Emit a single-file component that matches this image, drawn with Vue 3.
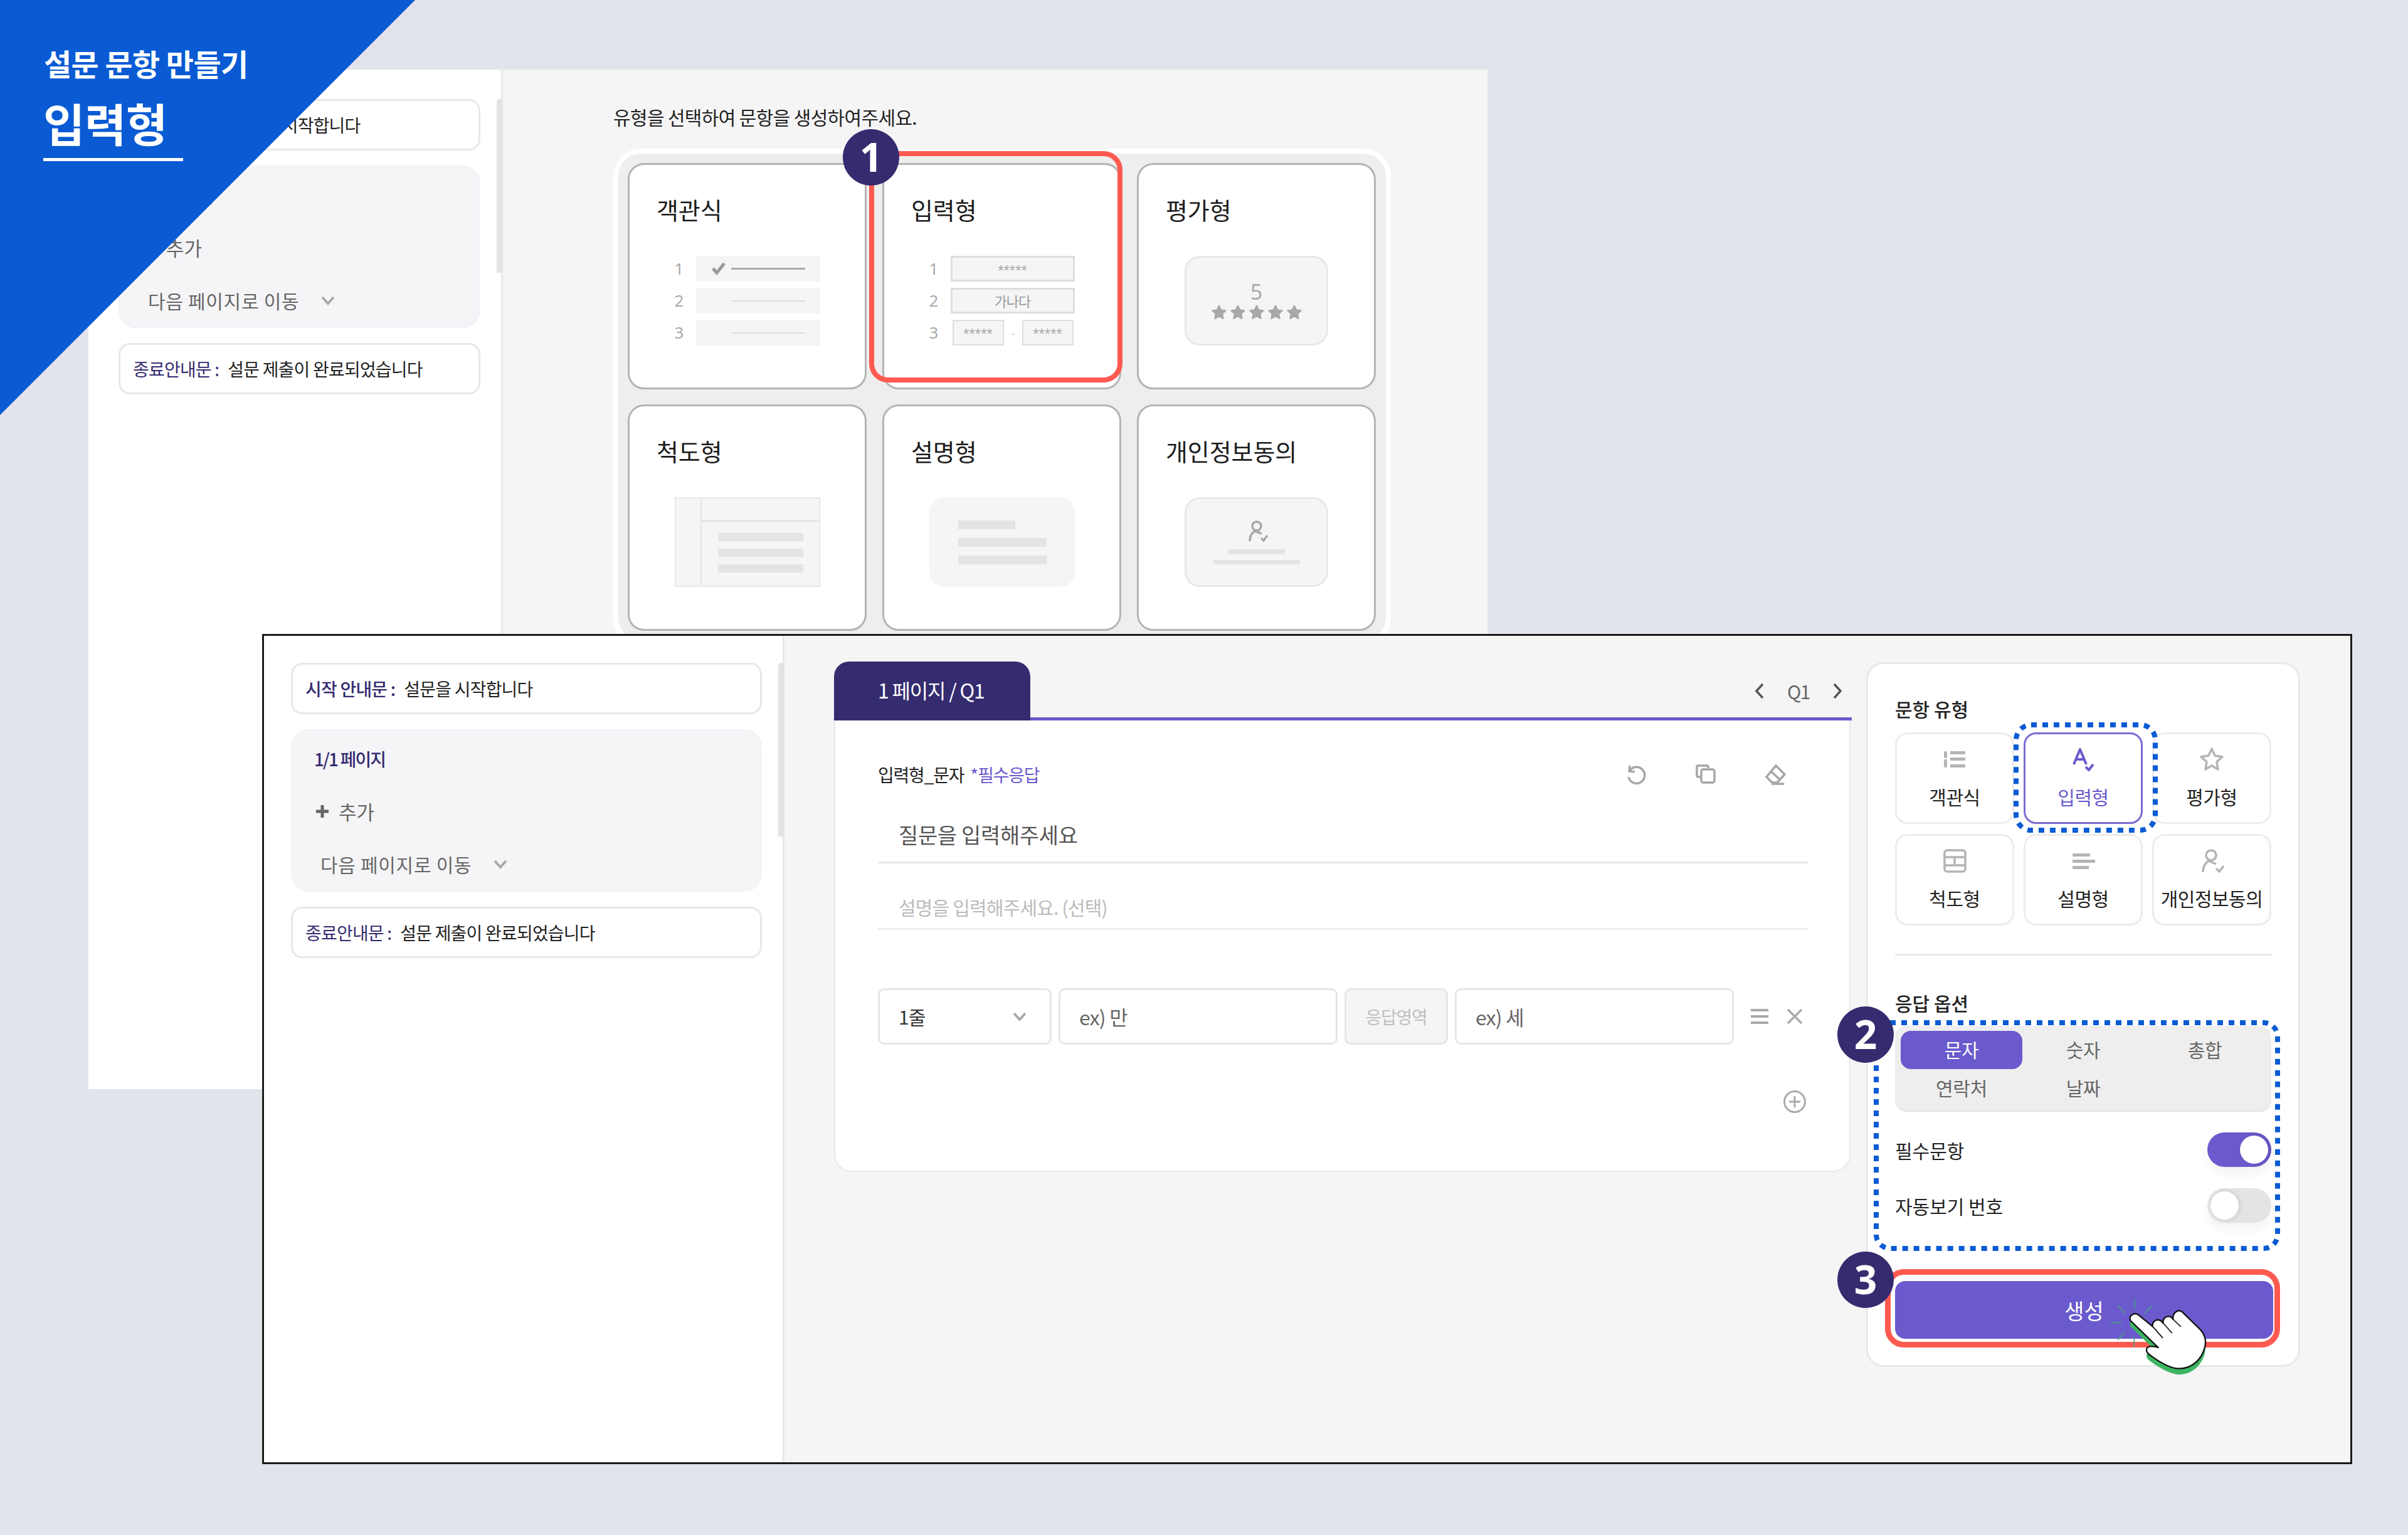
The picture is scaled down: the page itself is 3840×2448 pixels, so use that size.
<script setup>
const typeCards = ['객관식', '입력형', '평가형', '척도형', '설명형', '개인정보동의']
const tiles = [
  { label: '객관식', icon: 'list' },
  { label: '입력형', icon: 'a', on: true },
  { label: '평가형', icon: 'star' },
  { label: '척도형', icon: 'table' },
  { label: '설명형', icon: 'text' },
  { label: '개인정보동의', icon: 'person' }
]
const segs = ['문자', '숫자', '총합', '연락처', '날짜']
const starPts = '12,1.5 15.3,8.3 22.8,9.3 17.3,14.5 18.7,22 12,18.4 5.3,22 6.7,14.5 1.2,9.3 8.7,8.3'
const handPath = 'M472 318C462 295 490 275 512 292L578 346C575 328 590 313 606 315C615 315 622 322 628 330C626 310 640 297 655 298C665 298 672 305 676 312C672 285 695 262 718 275L805 360C828 385 836 415 828 445C815 500 770 548 705 548C670 548 620 522 575 490C555 478 545 465 550 452C555 438 585 440 605 447Z'
</script>

<template>
  <div class="canvas">
    <section class="win back">
      <aside class="side back-side">
        <div class="note"><b>시작 안내문 :</b><span>설문을 시작합니다</span></div>
        <div class="group">
          <div class="g-title">1/1 페이지</div>
          <div class="g-add"><svg class="plus" viewBox="0 0 24 24"><path d="M12 2v20M2 12h20" /></svg>추가</div>
          <div class="g-next">다음 페이지로 이동<svg class="chev" viewBox="0 0 24 16"><path d="M3 3l9 10 9-10" /></svg></div>
        </div>
        <div class="note"><i>종료안내문 :</i><span>설문 제출이 완료되었습니다</span></div>
        <div class="scroll back-scroll"></div>
      </aside>
      <main class="back-main">
        <p class="intro">유형을 선택하여 문항을 생성하여주세요.</p>
        <div class="frame">
          <article v-for="(c, i) in typeCards" :key="c" class="tcard">
            <h3>{{ c }}</h3>
            <div v-if="i === 0" class="ill rows">
              <template v-for="n in 3" :key="n">
                <span class="num">{{ n }}</span>
                <div class="opt">
                  <svg v-if="n === 1" class="ck" viewBox="0 0 24 22"><path d="M3 11l6 7L21 3" /></svg>
                  <i :class="n === 1 ? 'ln dark' : 'ln'"></i>
                </div>
              </template>
            </div>
            <div v-else-if="i === 1" class="ill rows">
              <span class="num">1</span><div class="inp">*****</div>
              <span class="num">2</span><div class="inp kr">가나다</div>
              <span class="num">3</span>
              <div class="pair"><div class="inp">*****</div><em>-</em><div class="inp">*****</div></div>
            </div>
            <div v-else-if="i === 2" class="ill box bordered rate">
              <span>5</span>
              <div class="stars"><svg v-for="n in 5" :key="n" viewBox="0 0 24 24"><polygon :points="starPts" /></svg></div>
            </div>
            <div v-else-if="i === 3" class="ill scale">
              <div class="s-left"></div>
              <div class="s-right"><div class="s-head"></div><div class="s-bars"><i></i><i></i><i></i></div></div>
            </div>
            <div v-else-if="i === 4" class="ill box desc-ill"><i class="short"></i><i></i><i></i></div>
            <div v-else class="ill box bordered agree">
              <svg viewBox="0 0 36 36"><circle cx="17" cy="10" r="7" /><path d="M6 34c0-8 3-13 8-16l11 4" /><path d="M24 29l4 4 6-8" /></svg>
              <i class="a1"></i><i class="a2"></i>
            </div>
          </article>
        </div>
      </main>
    </section>

    <div class="corner">
      <p class="c-sub">설문 문항 만들기</p>
      <p class="c-main">입력형</p>
    </div>

    <section class="win front">
      <aside class="side front-side">
        <div class="note"><b>시작 안내문 :</b><span>설문을 시작합니다</span></div>
        <div class="group">
          <div class="g-title">1/1 페이지</div>
          <div class="g-add"><svg class="plus" viewBox="0 0 24 24"><path d="M12 2v20M2 12h20" /></svg>추가</div>
          <div class="g-next">다음 페이지로 이동<svg class="chev" viewBox="0 0 24 16"><path d="M3 3l9 10 9-10" /></svg></div>
        </div>
        <div class="note"><i>종료안내문 :</i><span>설문 제출이 완료되었습니다</span></div>
        <div class="scroll front-scroll"></div>
      </aside>

      <div class="editor">
        <div class="tabbar">
          <div class="tab">1 페이지 / Q1</div>
          <div class="pager">
            <svg viewBox="0 0 16 28"><path d="M13 3L3 14l10 11" /></svg>
            <span>Q1</span>
            <svg viewBox="0 0 16 28"><path d="M3 3l10 11L3 25" /></svg>
          </div>
        </div>
        <div class="qcard">
          <div class="toolbar">
            <div class="q-type">입력형_문자<span>*필수응답</span></div>
            <div class="tools">
              <svg viewBox="0 0 36 36"><path d="M8 4l-1 9 9 1" /><path d="M8 12A13 13 0 1 1 6 22" /></svg>
              <svg viewBox="0 0 36 36"><path d="M22 8V6a2 2 0 0 0-2-2H6a2 2 0 0 0-2 2v14a2 2 0 0 0 2 2h4" /><rect x="11" y="10" width="21" height="21" rx="3" /></svg>
              <svg viewBox="0 0 36 36"><path d="M19 4l14 14-12 13h-8L4 22z" /><path d="M11 13l14 13" /><path d="M12 33h20" /></svg>
            </div>
          </div>
          <div class="q-line">질문을 입력해주세요</div>
          <div class="d-line">설명을 입력해주세요. (선택)</div>
          <div class="ans-row">
            <div class="fld sel">1줄<svg class="chev" viewBox="0 0 24 16"><path d="M3 3l9 10 9-10" /></svg></div>
            <div class="fld in">ex) 만</div>
            <div class="fld ans">응답영역</div>
            <div class="fld in">ex) 세</div>
            <svg class="menu" viewBox="0 0 30 26"><path d="M1 3h28M1 13h28M1 23h28" /></svg>
            <svg class="close" viewBox="0 0 26 26"><path d="M2 2l22 22M24 2L2 24" /></svg>
          </div>
          <div class="add-row">
            <svg viewBox="0 0 38 38"><circle cx="19" cy="19" r="16.5" /><path d="M19 10v18M10 19h18" /></svg>
          </div>
        </div>
      </div>

      <aside class="panel">
        <h4 class="h-type">문항 유형</h4>
        <div class="tiles">
          <div v-for="t in tiles" :key="t.label" :class="['tile', { on: t.on }]">
            <svg v-if="t.icon === 'list'" viewBox="0 0 40 40"><g class="fillg"><rect x="3" y="7" width="5" height="11" rx="2" /><rect x="3" y="20" width="5" height="13" rx="2" /><rect x="13" y="7" width="24" height="5" rx="1" /><rect x="13" y="17" width="24" height="5" rx="1" /><rect x="13" y="28" width="24" height="5" rx="1" /></g></svg>
            <svg v-else-if="t.icon === 'a'" viewBox="0 0 40 40"><path d="M5 28L15 4l10 24M8.500 20h13" /><path d="M24 32l5 5 7-9" /></svg>
            <svg v-else-if="t.icon === 'star'" viewBox="0 0 40 40"><path d="M20 3l5 11 12 2-9 8 2 12-10-6-10 6 2-12-9-8 12-2z" /></svg>
            <svg v-else-if="t.icon === 'table'" viewBox="0 0 40 40"><rect x="4" y="3" width="33" height="34" rx="4" /><path d="M4 14h33M4 27h33M20 14v13" /></svg>
            <svg v-else-if="t.icon === 'text'" viewBox="0 0 40 40"><g class="fillg"><rect x="3" y="8" width="28" height="5" rx="1" /><rect x="3" y="18" width="36" height="5" rx="1" /><rect x="3" y="28" width="26" height="5" rx="1" /></g></svg>
            <svg v-else viewBox="0 0 40 40"><circle cx="19" cy="11" r="8" /><path d="M6 38c0-9 4-15 9-18l12 5" /><path d="M27 32l5 5 7-9" /></svg>
            <span>{{ t.label }}</span>
          </div>
        </div>
        <div class="rule"></div>
        <h4 class="h-opt">응답 옵션</h4>
        <div class="segs">
          <div v-for="(s, i) in segs" :key="s" :class="['seg', { on: i === 0 }]">{{ s }}</div>
        </div>
        <div class="tog-row first"><span>필수문항</span><div class="tog on"><i></i></div></div>
        <div class="tog-row"><span>자동보기 번호</span><div class="tog"><i></i></div></div>
        <button class="make">생성</button>
      </aside>
    </section>

    <div class="ring r1"></div>
    <div class="ring r3"></div>
    <svg class="dots d1" viewBox="0 0 230 176"><rect x="4" y="4" width="222" height="168" rx="24" /></svg>
    <svg class="dots d2" viewBox="0 0 648 368"><rect x="4" y="4" width="640" height="360" rx="22" /></svg>
    <div class="badge b1">1</div>
    <div class="badge b2">2</div>
    <div class="badge b3">3</div>
    <svg class="hand" viewBox="0 0 960 660">
      <path class="tick" d="M492 215v47M575 247l-35 36M412 247l35 36M378 328h52M445 375l-33 35M490 395v50" />
      <path class="hand-sh" :d="handPath" transform="translate(0 28)" />
      <path class="hand-body" :d="handPath" />
      <path class="hand-line" d="M578 346l48 54M628 330l42 46M676 312l36 34" />
    </svg>
  </div>
</template>

<style>
html, body { margin: 0; background: #e1e4ea; }
</style>

<style scoped>
* { box-sizing: border-box; }
.canvas { position: relative; width: 3840px; height: 2448px; overflow: hidden; background: #e1e4ea; font-family: "Noto Sans CJK KR", "Noto Sans", sans-serif; color: #222; }
p, h3, h4 { margin: 0; font-weight: 400; }
svg { display: block; flex: none; }

.win { position: absolute; display: flex; background: #f5f5f6; }
.back { left: 141px; top: 111px; width: 2231px; height: 1626px; overflow: hidden; }
.front { left: 418px; top: 1011px; width: 3333px; height: 1324px; border: 3px solid #1a1a1a; }

.side { position: relative; flex: none; background: #fff; border-right: 3px solid #e8e8e8; display: flex; flex-direction: column; gap: 24px; }
.back-side { width: 661px; padding: 47px 0 0 48px; }
.front-side { width: 830px; padding: 43px 0 0 43px; }
.note { height: 82px; border: 3px solid #e8e8e8; border-radius: 18px; display: flex; align-items: center; padding-left: 20px; gap: 14px; font-size: 28px; letter-spacing: -0.8px; background: #fff; }
.back-side .note, .back-side .group { width: 577px; }
.front-side .note, .front-side .group { width: 751px; }
.note b { font-weight: 500; color: #352c6f; }
.note i { font-style: normal; color: #352c6f; }
.group { height: 259px; border-radius: 28px; background: #f5f5f7; border: 2px solid #f2f2f8; display: flex; flex-direction: column; padding: 16px 0 0 35px; }
.g-title { height: 58px; line-height: 58px; font-size: 28px; font-weight: 500; color: #352c6f; letter-spacing: -1.9px; }
.g-add { height: 84px; display: flex; align-items: center; gap: 14px; font-size: 31px; color: #666; padding: 25px 0 0 1px; }
.plus { width: 24px; height: 24px; }
.plus path { stroke: #666; stroke-width: 5; fill: none; }
.g-next { height: 82px; display: flex; align-items: center; gap: 34px; font-size: 30px; color: #666; letter-spacing: 0.7px; padding: 27px 0 0 10px; }
.chev { width: 24px; height: 16px; }
.chev path { stroke: #aaa; stroke-width: 4; fill: none; }
.scroll { position: absolute; right: -3px; width: 10px; height: 277px; background: #e3e3e3; border-radius: 5px 5px 0 0; }
.back-scroll { top: 47px; }
.front-scroll { top: 43px; }

.back-main { padding: 52px 0 0 176px; }
.intro { font-size: 30px; line-height: 46px; letter-spacing: -0.65px; color: #222; margin-bottom: 28px; }
.frame { width: 1240px; border: 8px solid #fff; border-radius: 44px; background: #eee; padding: 15px; display: grid; grid-template-columns: repeat(3, 381px); grid-auto-rows: 361px; gap: 24px 25px; }
.tcard { background: #fff; border: 3px solid #b4b4b4; border-radius: 26px; display: flex; flex-direction: column; padding-top: 48px; }
.tcard h3 { font-size: 38px; line-height: 46px; padding-left: 43px; letter-spacing: -0.1px; color: #1c1c1c; margin-bottom: 51px; }
.ill { width: 232px; height: 143px; align-self: center; flex: none; }
.rows { display: grid; grid-template-columns: 34px 198px; grid-auto-rows: 41px; row-gap: 10px; }
.num { font-size: 26px; color: #aaa; line-height: 41px; font-family: "Noto Sans", sans-serif; }
.opt { background: #f5f5f5; position: relative; display: flex; align-items: center; padding-left: 56px; }
.ck { position: absolute; left: 24px; top: 9px; width: 24px; height: 22px; }
.ck path { stroke: #999; stroke-width: 5; fill: none; }
.ln { display: block; width: 118px; height: 2px; background: #ddd; }
.ln.dark { height: 3px; background: #aaa; }
.inp { height: 41px; background: #f5f5f5; border: 3px solid #dedede; text-align: center; font: 24px/42px "Liberation Sans", sans-serif; color: #aaa; letter-spacing: 0; }
.inp.kr { font: 22px/35px "Noto Sans CJK KR", sans-serif; color: #999; letter-spacing: -1px; }
.pair { display: flex; align-items: center; padding-left: 3px; }
.pair .inp { width: 82px; border-width: 2px; }
.pair em { width: 29px; text-align: center; font-style: normal; color: #ccc; font-size: 20px; }
.box { background: #f5f5f5; border-radius: 24px; }
.bordered { border: 3px solid #e8e8e8; }
.rate { display: flex; flex-direction: column; align-items: center; padding-top: 34px; width: 229px; }
.rate span { font-size: 34px; line-height: 40px; color: #aaa; font-family: "Noto Sans", sans-serif; }
.stars { display: flex; gap: 6px; margin-top: 1px; }
.stars svg { width: 24px; height: 24px; }
.stars polygon { fill: #a8a8a8; stroke: #a8a8a8; stroke-width: 2; stroke-linejoin: round; }
.scale { display: flex; background: #f5f5f5; border: 2px solid #e8e8e8; }
.s-left { width: 41px; border-right: 2px solid #e4e4e4; }
.s-right { flex: 1; }
.s-head { height: 37px; border-bottom: 3px solid #e4e4e4; }
.s-bars { padding: 18px 25px 0 26px; display: flex; flex-direction: column; gap: 12px; }
.s-bars i { display: block; height: 13px; background: #e4e4e4; }
.desc-ill { padding: 37px 45px 0 46px; display: flex; flex-direction: column; gap: 14px; }
.desc-ill i { display: block; height: 14px; background: #e4e4e4; }
.desc-ill .short { width: 91px; }
.agree { width: 229px; display: flex; flex-direction: column; align-items: center; padding-top: 33px; }
.agree svg { width: 36px; height: 36px; margin-left: 2px; }
.agree svg circle, .agree svg path { fill: none; stroke: #a8a8a8; stroke-width: 3.500; }
.agree i { display: block; background: #e4e4e4; }
.a1 { width: 90px; height: 8px; margin-top: 11px; }
.a2 { width: 138px; height: 7px; margin-top: 9px; }

.corner { position: absolute; left: 0; top: 0; width: 662px; height: 662px; background: #0a5bd3; clip-path: polygon(0 0, 100% 0, 0 100%); padding: 66px 0 0 70px; color: #fff; }
.c-sub { font-size: 48px; line-height: 68px; font-weight: 700; letter-spacing: -0.6px; }
.c-main { font-size: 72px; line-height: 94px; font-weight: 700; margin-top: 14px; width: 223px; height: 109px; border-bottom: 5px solid #fff; margin-left: -1px; letter-spacing: -0.2px; }

.editor { flex: none; width: 1623px; margin: 41px 0 0 79px; }
.tabbar { height: 94px; border-bottom: 5px solid #6a5acd; display: flex; justify-content: space-between; }
.tab { width: 313px; height: 94px; background: #352c6f; border-radius: 24px 24px 0 0; color: #fff; font-size: 32px; line-height: 90px; padding-left: 70px; letter-spacing: -1.2px; }
.pager { display: flex; align-items: center; gap: 36px; padding-right: 15px; font-size: 30px; color: #666; height: 94px; letter-spacing: -1.5px; }
.pager svg { width: 16px; height: 28px; }
.pager svg path { stroke: #555; stroke-width: 3.500; fill: none; }
.qcard { width: 1621px; height: 720px; background: #fff; border: 2px solid #e8e8e8; border-top: 0; border-radius: 0 0 28px 28px; padding: 66px 66px 0 68px; }
.toolbar { height: 40px; display: flex; justify-content: space-between; align-items: center; }
.q-type { font-size: 28px; letter-spacing: -1.2px; color: #222; display: flex; gap: 10px; }
.q-type span { color: #6a5acd; }
.tools { display: flex; gap: 75px; padding-right: 34px; }
.tools svg { width: 36px; height: 36px; }
.tools svg path, .tools svg rect { fill: none; stroke: #a6a6a6; stroke-width: 3.500; }
.q-line { height: 122px; border-bottom: 3px solid #e6e6e6; padding: 54px 0 0 33px; font-size: 34px; line-height: 44px; color: #555; letter-spacing: -0.35px; }
.d-line { height: 106px; border-bottom: 3px solid #ececec; padding: 48px 0 0 33px; font-size: 30px; line-height: 42px; color: #bbb; letter-spacing: -0.8px; }
.ans-row { margin-top: 93px; height: 90px; display: flex; align-items: center; gap: 11px; }
.fld { height: 90px; border: 3px solid #e6e6e6; border-radius: 10px; display: flex; align-items: center; font-size: 32px; color: #666; letter-spacing: -0.8px; }
.sel { width: 277px; padding: 0 36px 0 30px; justify-content: space-between; color: #333; font-size: 30px; }
.in { width: 445px; padding-left: 30px; }
.ans { width: 165px; background: #f5f5f5; color: #c0c0c0; justify-content: center; font-size: 28px; letter-spacing: -1.3px; }
.menu { width: 30px; height: 26px; margin-left: 15px; }
.menu path { stroke: #aaa; stroke-width: 4; fill: none; }
.close { width: 26px; height: 26px; margin-left: 17px; }
.close path { stroke: #aaa; stroke-width: 3.500; fill: none; }
.add-row { margin-top: 72px; display: flex; justify-content: flex-end; padding-right: 2px; }
.add-row svg { width: 38px; height: 38px; }
.add-row circle, .add-row path { fill: none; stroke: #aaa; stroke-width: 3; }

.panel { flex: none; width: 692px; height: 1124px; margin: 42px 0 0 23px; background: #fff; border: 3px solid #e8e8e8; border-radius: 28px; padding: 48px 43px 0; }
.panel h4 { font-size: 30px; line-height: 46px; font-weight: 500; color: #222; }
.tiles { margin-top: 15px; display: grid; grid-template-columns: repeat(3, 190px); grid-auto-rows: 146px; gap: 16px 15px; }
.tile { border: 3px solid #ececec; border-radius: 20px; display: flex; flex-direction: column; align-items: center; padding-top: 20px; font-size: 30px; letter-spacing: -0.5px; color: #222; }
.tile span { margin-top: 17px; line-height: 44px; white-space: nowrap; }
.tile svg { width: 40px; height: 40px; }
.tile svg path, .tile svg rect, .tile svg circle { fill: none; stroke: #b4b4b4; stroke-width: 3.500; stroke-linejoin: round; }
.tile svg .fillg rect { fill: #b4b4b4; stroke: none; }
.tile.on { border: 3px solid #7a6bd3; color: #6a5acd; }
.tile.on svg path { stroke: #6a5acd; stroke-width: 4; }
.rule { height: 3px; background: #e8e8e8; margin-top: 45px; }
.panel .h-opt { margin-top: 52px; }
.segs { margin-top: 14px; height: 137px; background: #eee; border-bottom: 2px solid #e4e4e4; border-radius: 18px; padding: 8px 9px; display: grid; grid-template-columns: repeat(3, 1fr); grid-auto-rows: 61px; }
.seg { border-radius: 16px; text-align: center; line-height: 59px; font-size: 30px; letter-spacing: -0.3px; color: #666; }
.seg.on { background: #6a5acd; color: #fff; }
.tog-row { margin-top: 34px; height: 55px; display: flex; justify-content: space-between; align-items: center; font-size: 30px; color: #222; letter-spacing: 0; }
.tog-row.first { margin-top: 33px; }
.tog { width: 102px; height: 55px; border-radius: 28px; background: #e4e4e4; padding: 5px; box-shadow: 0 10px 16px rgba(0, 0, 0, 0.05); }
.tog i { display: block; width: 45px; height: 45px; border-radius: 50%; background: #fff; box-shadow: 2px 0 8px rgba(0, 0, 0, 0.12); }
.tog.on { background: #6a5acd; padding-left: 52px; }
.make { margin-top: 93px; width: 603px; height: 92px; border: 0; border-radius: 16px; background: #6a5acd; color: #fff; font: 400 34px "Noto Sans CJK KR", sans-serif; display: block; }

.ring { position: absolute; border-style: solid; border-color: #ff5a50; }
.r1 { left: 1386px; top: 241px; width: 404px; height: 369px; border-width: 8px; border-radius: 30px; }
.r3 { left: 3006px; top: 2024px; width: 630px; height: 125px; border-width: 9px; border-radius: 30px; }
.dots { position: absolute; fill: none; stroke: #0a5bd3; stroke-width: 8; stroke-dasharray: 9 9; }
.d1 { left: 3211px; top: 1152px; width: 230px; height: 176px; }
.d2 { left: 2988px; top: 1627px; width: 648px; height: 368px; }
.badge { position: absolute; width: 90px; height: 90px; border-radius: 50%; background: #352c6f; color: #fff; font: 700 64px/88px "Noto Sans", sans-serif; text-align: center; }
.b1 { left: 1344px; top: 206px; }
.b2 { left: 2930px; top: 1605px; }
.b3 { left: 2930px; top: 1996px; }
.hand { position: absolute; left: 3240px; top: 2000px; width: 320px; height: 220px; overflow: visible; }
.tick { fill: none; stroke: #4aa080; stroke-width: 5; }
.hand-sh { fill: #3cb460; }
.hand-body { fill: #fff; stroke: #111; stroke-width: 7; stroke-linejoin: round; }
.hand-line { fill: none; stroke: #111; stroke-width: 5; stroke-linecap: round; }
</style>
